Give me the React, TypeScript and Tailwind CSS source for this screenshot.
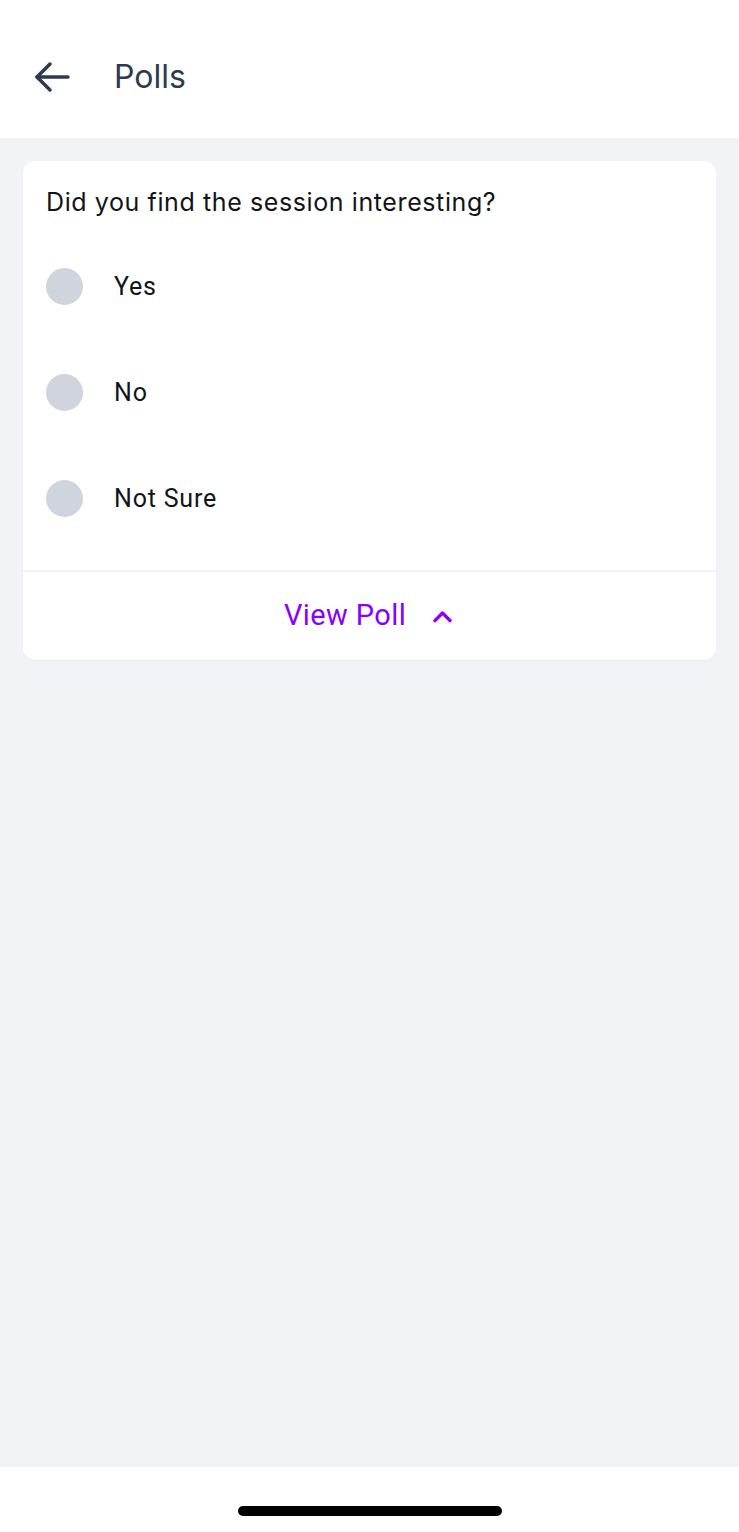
import React from "react";

const options = ["Yes", "No", "Not Sure"];

export default function App() {
  return (
    <div className="flex min-h-[1532px] w-[739px] flex-col bg-[#f2f3f7] font-['Inter','Noto_Sans',sans-serif]">
      <header className="flex h-[138px] items-start bg-white pt-[53px]">
        <div className="ml-[28px] flex h-[48px] w-[86px] items-center">
          <svg width="48" height="48" viewBox="0 0 24 24" fill="none" stroke="#2d3a4f" strokeWidth="1.75" strokeLinecap="round" strokeLinejoin="round">
            <path d="M20 12H4.5" />
            <path d="M11 5.5L4.5 12l6.5 6.5" />
          </svg>
        </div>
        <span className="flex h-[48px] items-center text-[32px] leading-none text-[#2d3a4f]">Polls</span>
      </header>
      <main className="flex-1 px-[23px] pt-[23px]">
        <div className="overflow-hidden rounded-[12px] bg-white shadow-[0_1px_2px_rgba(0,0,0,0.04)]">
          <div className="px-[23px] pt-[25px] pb-[53px]">
            <p className="text-[25px] leading-[32px] tracking-[0.6px] text-[#111418]">Did you find the session interesting?</p>
            <div className="mt-[50px] flex flex-col gap-[69px]">
              {options.map((o) => (
                <div key={o} className="flex h-[37px] items-center">
                  <div className="h-[37px] w-[37px] rounded-full bg-[#d0d4dd]" />
                  <span className="ml-[31px] font-['Roboto',sans-serif] text-[25px] tracking-[0.8px] text-[#111418]">{o}</span>
                </div>
              ))}
            </div>
          </div>
          <div className="h-[2px] bg-[#f2f3f7]" />
          <div className="flex h-[88px] items-center justify-center pl-[4px]">
            <span className="font-['Roboto',sans-serif] text-[29px] tracking-[0.4px] text-[#8a00ff]">View Poll</span>
            <svg className="ml-[20px]" width="33" height="33" viewBox="0 0 24 24" fill="none" stroke="#8a00ff" strokeWidth="2.5" strokeLinecap="round" strokeLinejoin="round">
              <path d="M6.5 15L12 9.5l5.5 5.5" />
            </svg>
          </div>
        </div>
      </main>
      <footer className="flex h-[65px] items-start justify-center bg-white pt-[39px]">
        <div className="h-[10px] w-[264px] rounded-full bg-black" />
      </footer>
    </div>
  );
}
